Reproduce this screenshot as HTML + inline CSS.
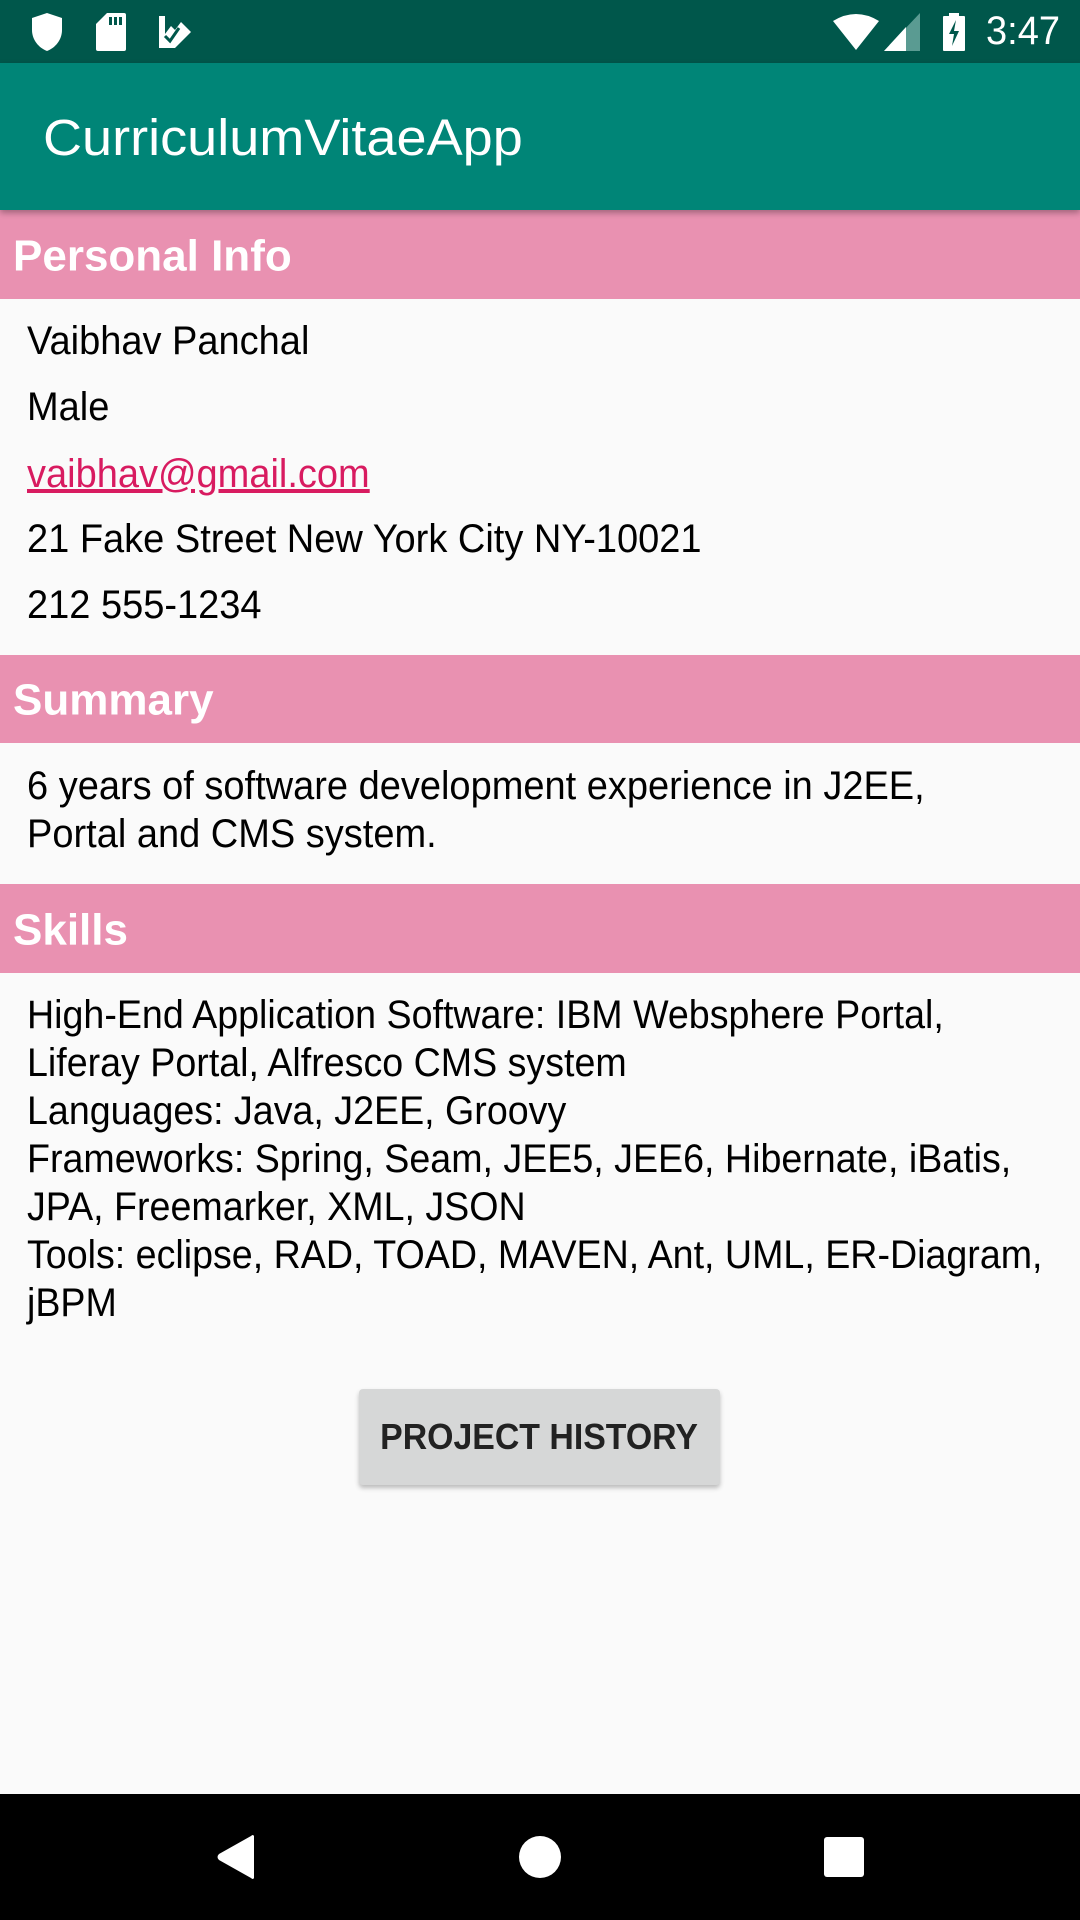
<!DOCTYPE html>
<html><head><meta charset="utf-8"><style>
body{margin:0;width:1080px;height:1920px;position:relative;background:#fafafa;font-family:"Liberation Sans",sans-serif;overflow:hidden}
.a{position:absolute}
.sb{top:0;left:0;width:1080px;height:63px;background:#00574b}
.ab{top:63px;left:0;width:1080px;height:147px;background:#008577;box-shadow:0 3px 6px rgba(0,0,0,.3);z-index:2}
.ab span{position:absolute;left:43px;top:45px;font-size:51px;color:#fff;transform:scaleX(1.06);transform-origin:left}
.h{left:0;width:1080px;background:#e991b1;color:#fff;font-weight:bold;font-size:44px}
.h span{position:absolute;left:13px;top:50%;transform:translateY(-47%)}
.t{left:27px;font-size:40px;color:#000;white-space:nowrap;transform:scaleX(0.95);transform-origin:left}
.btn{left:359px;top:1389px;width:361px;height:96px;background:#d6d7d7;border-radius:4px;box-shadow:0 3px 5px rgba(0,0,0,.25);font-size:36px;font-weight:bold;color:#222;text-align:center;line-height:96px}
.btn span{display:inline-block;transform:scaleX(0.94)}
.nb{left:0;top:1794px;width:1080px;height:126px;background:#000}
</style></head><body>
<div class="a sb">
<svg class="a" style="left:30px;top:12px" width="34" height="40" viewBox="0 0 34 40"><path d="M17 1 L32 6 V18 C32 28 25 36 17 39 C9 36 2 28 2 18 V6 Z" fill="#fff"/></svg>
<svg class="a" style="left:95px;top:12px" width="32" height="40" viewBox="0 0 32 40"><path d="M12 1 H29 Q31 1 31 3 V37 Q31 39 29 39 H3 Q1 39 1 37 V12 Z" fill="#fff"/><rect x="14" y="5" width="3" height="8" fill="#00574b"/><rect x="19" y="5" width="3" height="8" fill="#00574b"/><rect x="24" y="5" width="3" height="8" fill="#00574b"/></svg>
<svg class="a" style="left:157px;top:14px" width="36" height="36" viewBox="0 0 36 36"><path d="M2 2 H8 V20 L14 12 L18 16 L24 8 L34 18 L18 34 H2 Z" fill="#fff"/><path d="M8 22 L13 27 L22 14" stroke="#00574b" stroke-width="3" fill="none"/></svg>
<svg class="a" style="left:832px;top:13px" width="48" height="38" viewBox="0 0 48 38"><path d="M1 8 Q24 -6 47 8 L24 37 Z" fill="#fff"/></svg>
<svg class="a" style="left:884px;top:13px" width="36" height="38" viewBox="0 0 36 38"><path d="M36 0 V38 H0 Z" fill="#5a9b92"/><path d="M22 14 V38 H0 Z" fill="#fff"/></svg>
<svg class="a" style="left:942px;top:13px" width="24" height="38" viewBox="0 0 24 38"><rect x="7" y="0" width="10" height="4" fill="#fff"/><rect x="1" y="3" width="22" height="35" rx="1" fill="#fff"/><path d="M14 7 L7 21 H12 L10 33 L17 18 H12 Z" fill="#00574b"/></svg>
<span class="a" style="left:986px;top:9px;font-size:40px;color:#fff;transform:scaleX(0.95);transform-origin:left">3:47</span>
</div>
<div class="a ab"><span>CurriculumVitaeApp</span></div>
<div class="a h" style="top:210px;height:89px"><span>Personal Info</span></div>
<div class="a t" style="top:319px">Vaibhav Panchal</div>
<div class="a t" style="top:385px">Male</div>
<div class="a t" style="top:452px;color:#d81b60;text-decoration:underline">vaibhav@gmail.com</div>
<div class="a t" style="top:517px">21 Fake Street New York City NY-10021</div>
<div class="a t" style="top:583px">212 555-1234</div>
<div class="a h" style="top:655px;height:88px"><span>Summary</span></div>
<div class="a t" style="top:762px;line-height:48px">6 years of software development experience in J2EE,<br>Portal and CMS system.</div>
<div class="a h" style="top:884px;height:89px"><span>Skills</span></div>
<div class="a t" style="top:991px;line-height:48px;transform:scaleX(0.94)">High-End Application Software: IBM Websphere Portal,<br>Liferay Portal, Alfresco CMS system<br>Languages: Java, J2EE, Groovy<br>Frameworks: Spring, Seam, JEE5, JEE6, Hibernate, iBatis,<br>JPA, Freemarker, XML, JSON<br>Tools: eclipse, RAD, TOAD, MAVEN, Ant, UML, ER-Diagram,<br>jBPM</div>
<div class="a btn"><span>PROJECT HISTORY</span></div>
<div class="a nb">
<svg class="a" style="left:216px;top:40px" width="40" height="46" viewBox="0 0 40 46"><path d="M38 2 V44 Q37 46 35 44 L3 26 Q0 23 3 20 L35 2 Q37 0 38 2 Z" fill="#fff"/></svg>
<div class="a" style="left:519px;top:42px;width:42px;height:42px;border-radius:50%;background:#fff"></div>
<div class="a" style="left:824px;top:43px;width:40px;height:40px;border-radius:3px;background:#fff"></div>
</div>
</body></html>
